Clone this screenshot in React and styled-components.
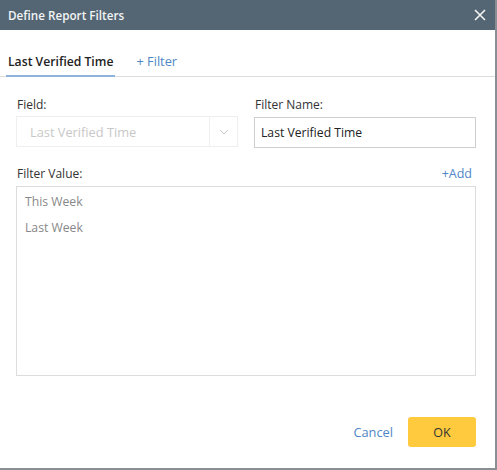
import React from "react";
import styled, { createGlobalStyle } from "styled-components";

const GlobalStyle = createGlobalStyle`
    html, body {
        margin: 0;
        padding: 0;
        background: #ffffff;
    }
    body {
        font-family: "Open Sans", "Noto Sans", sans-serif;
    }
`;

const Dialog = styled.div`
    width: 495px;
    height: 468px;
    background: #fff;
    border-right: 2px solid #8a8f93;
    border-bottom: 2px solid #8a8f93;
    display: flex;
    flex-direction: column;
`;

const Header = styled.div`
    height: 30px;
    background: #546673;
    display: flex;
    align-items: center;
    justify-content: space-between;
    padding: 0 9px 0 8px;
    color: #f2f4f5;
    font-size: 11.7px;
    font-weight: 600;
`;

const CloseButton = styled.button`
    border: none;
    background: none;
    padding: 0;
    display: flex;
    cursor: pointer;
`;

const Tabs = styled.div`
    display: flex;
    gap: 19px;
    margin-top: 23px;
    padding-left: 6px;
    border-bottom: 1px solid #dcdcdc;
`;

const Tab = styled.div`
    padding: 0 2px 5px;
    font-size: ${(p) => (p.$active ? "12.2px" : "12.8px")};
    font-weight: ${(p) => (p.$active ? 600 : 400)};
    color: ${(p) => (p.$active ? "#222" : "#4f86c6")};
    border-bottom: 2px solid ${(p) => (p.$active ? "#8fb4dc" : "transparent")};
    margin-bottom: -1px;
    line-height: 17px;
`;

const Body = styled.div`
    flex: 1;
    padding: 20px 19px 0 16px;
    display: flex;
    flex-direction: column;
`;

const Row = styled.div`
    display: grid;
    grid-template-columns: 222px 222px;
    column-gap: 16px;
`;

const FieldGroup = styled.div`
    display: flex;
    flex-direction: column;
`;

const Label = styled.div`
    font-size: 12px;
    color: #333;
    line-height: 16px;
    margin-bottom: 3px;
    padding-left: 1px;
`;

const Select = styled.div`
    height: 31px;
    box-sizing: border-box;
    border: 1px solid #eeeeee;
    display: flex;
    align-items: center;
`;

const SelectText = styled.div`
    flex: 1;
    padding-left: 13px;
    font-size: 12.8px;
    color: #c8c8c8;
`;

const SelectArrow = styled.div`
    width: 27px;
    align-self: stretch;
    border-left: 1px solid #f0f0f0;
    display: flex;
    align-items: center;
    justify-content: center;
`;

const Input = styled.input`
    height: 31px;
    box-sizing: border-box;
    border: 1px solid #cfcfcf;
    padding: 0 6px;
    font-family: inherit;
    font-size: 12.2px;
    color: #222;
    outline: none;
    margin-top: 1px;
`;

const ValueHeader = styled.div`
    display: flex;
    justify-content: space-between;
    align-items: flex-end;
    margin-top: 18px;
`;

const AddLink = styled.a`
    font-size: 12.5px;
    color: #4f86c6;
    line-height: 16px;
    margin-bottom: 3px;
    margin-right: 4px;
    cursor: pointer;
`;

const ValueList = styled.div`
    height: 190px;
    margin-top: 1px;
    box-sizing: border-box;
    border: 1px solid #dcdcdc;
    padding: 6px 8px;
    display: flex;
    flex-direction: column;
    gap: 9px;
`;

const ValueItem = styled.div`
    font-size: 12.2px;
    color: #888;
    line-height: 17px;
`;

const Footer = styled.div`
    display: flex;
    justify-content: flex-end;
    align-items: center;
    gap: 15px;
    padding: 0 19px 21px 0;
`;

const CancelButton = styled.button`
    border: none;
    background: none;
    font-family: inherit;
    font-size: 12.8px;
    color: #4f86c6;
    padding: 0;
    cursor: pointer;
`;

const OkButton = styled.button`
    width: 68px;
    height: 30px;
    border: none;
    border-radius: 3px;
    background: #ffca3d;
    font-family: inherit;
    font-size: 12.5px;
    color: #333;
    cursor: pointer;
`;

export default function App() {
    return (
        <>
            <GlobalStyle />
            <Dialog>
                <Header>
                    <span>Define Report Filters</span>
                    <CloseButton>
                        <svg width="12" height="12" viewBox="0 0 12 12">
                            <path d="M1 1 L11 11 M11 1 L1 11" stroke="#f2f4f5" strokeWidth="1.6" />
                        </svg>
                    </CloseButton>
                </Header>
                <Tabs>
                    <Tab $active>Last Verified Time</Tab>
                    <Tab>+ Filter</Tab>
                </Tabs>
                <Body>
                    <Row>
                        <FieldGroup>
                            <Label>Field:</Label>
                            <Select>
                                <SelectText>Last Verified Time</SelectText>
                                <SelectArrow>
                                    <svg width="10" height="6" viewBox="0 0 10 6">
                                        <path d="M1 1 L5 5 L9 1" fill="none" stroke="#c8c8c8" strokeWidth="1" />
                                    </svg>
                                </SelectArrow>
                            </Select>
                        </FieldGroup>
                        <FieldGroup>
                            <Label>Filter Name:</Label>
                            <Input defaultValue="Last Verified Time" />
                        </FieldGroup>
                    </Row>
                    <ValueHeader>
                        <Label>Filter Value:</Label>
                        <AddLink>+Add</AddLink>
                    </ValueHeader>
                    <ValueList>
                        <ValueItem>This Week</ValueItem>
                        <ValueItem>Last Week</ValueItem>
                    </ValueList>
                </Body>
                <Footer>
                    <CancelButton>Cancel</CancelButton>
                    <OkButton>OK</OkButton>
                </Footer>
            </Dialog>
        </>
    );
}
